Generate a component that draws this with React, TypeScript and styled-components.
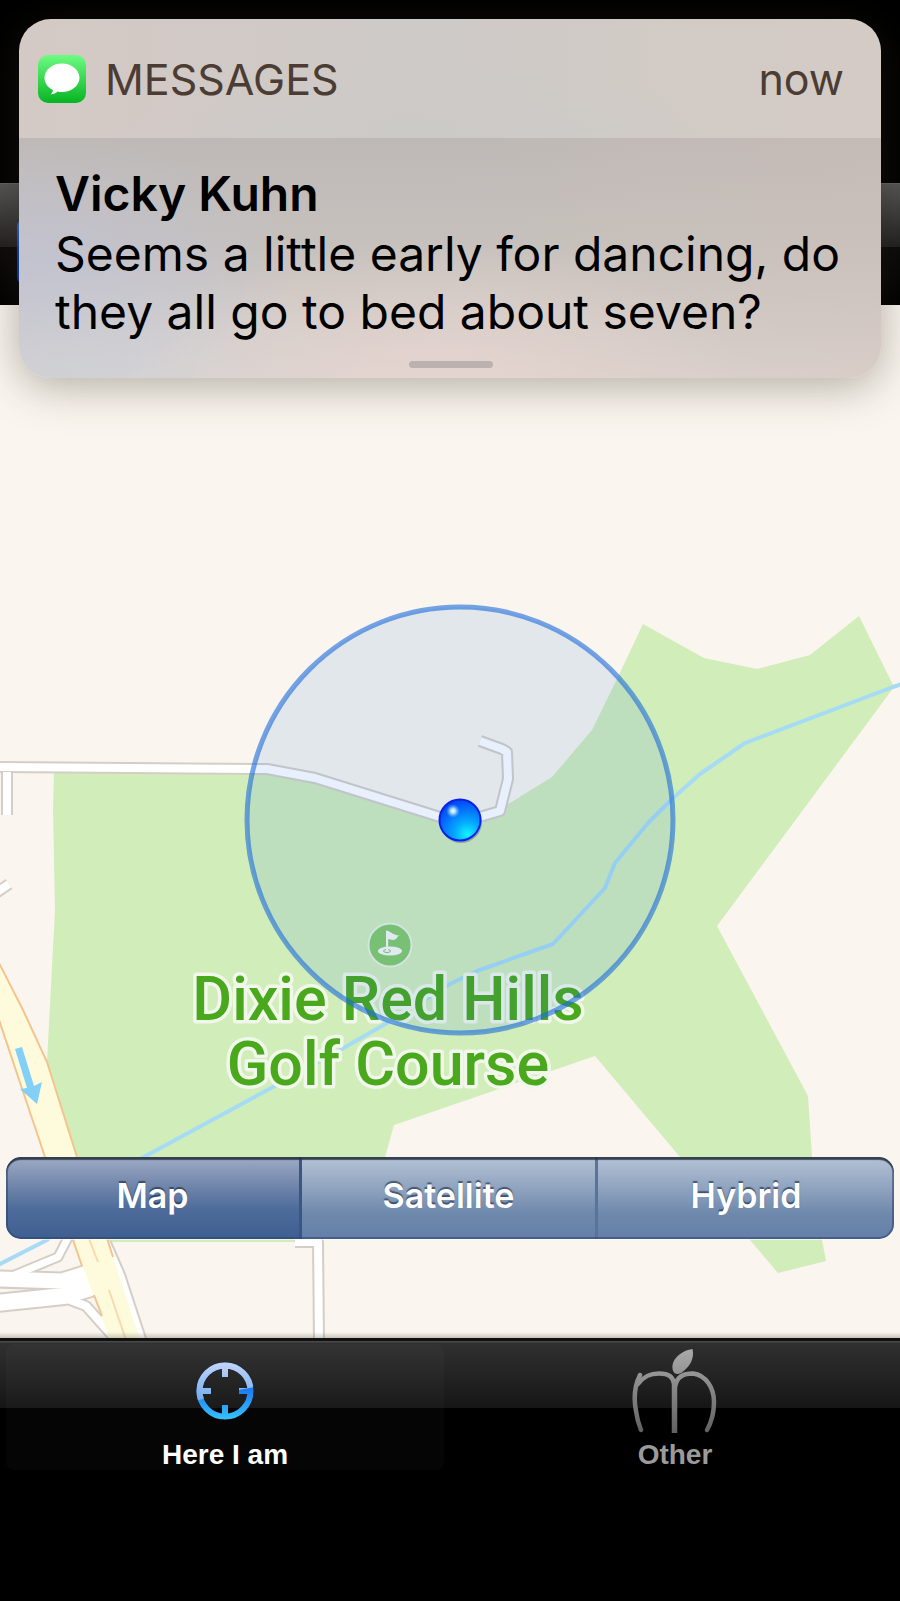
import React, { useState } from 'react';
import styled, { createGlobalStyle, css } from 'styled-components';

const uiFont = "Inter, Roboto, 'Liberation Sans', sans-serif";

const GlobalStyle = createGlobalStyle`
  * { box-sizing: border-box; }
  html, body { margin: 0; background: #000; }
  body { font-family: ${uiFont}; }
  button { font: inherit; border: 0; margin: 0; padding: 0; background: none; cursor: pointer; }
  p, h1, h2 { margin: 0; }
`;

const Screen = styled.main`
  position: relative;
  display: flex;
  flex-direction: column;
  min-height: 100vh;
  background: #000;
`;

const StatusArea = styled.div`
  height: 183px;
  background: #000;
`;

const NavBar = styled.div`
  display: flex;
  align-items: center;
  height: 122px;
  padding: 14px 17px 0;
  border-top: 1px solid #626262;
  background: linear-gradient(#555 0, #202020 63px, #0a0a0a 63px, #000 100%);
`;

const NavChip = styled.span`
  width: 120px;
  height: 66px;
  border-radius: 8px;
  background: linear-gradient(#3a6fd8, #0b3fb0 50%, #0434a8);
`;

/* Notification banner */

const Banner = styled.section`
  position: absolute;
  top: 19px;
  left: 19px;
  right: 19px;
  z-index: 2;
  overflow: hidden;
  border-radius: 32px;
  box-shadow: 0 8px 44px rgba(50, 45, 30, 0.36);
`;

const BannerHeader = styled.header`
  display: flex;
  align-items: center;
  gap: 19px;
  height: 119px;
  padding: 0 37px 0 19px;
  background:
    radial-gradient(ellipse at 47% 120%, rgba(202, 203, 200, 0.7), transparent 50%),
    linear-gradient(90deg, #d4c9c5, #cecac7 45%, #d4cbc5);
  color: #4b3c34;
  font-size: 44px;
  line-height: 60px;
`;

const AppName = styled.h1`
  flex: 1;
  font-size: 43px;
  font-weight: 400;
`;

const BannerTime = styled.span`
  font-size: 43px;
`;

const BannerBody = styled.div`
  display: flex;
  flex-direction: column;
  padding: 24px 35px 10px 36px;
  background:
    radial-gradient(ellipse 32% 55% at 0% 52%, rgba(192, 195, 216, 0.7), transparent),
    radial-gradient(ellipse 36% 62% at 48% 104%, rgba(232, 213, 208, 0.8), transparent),
    radial-gradient(ellipse 34% 50% at 8% 100%, rgba(208, 210, 214, 0.9), transparent),
    linear-gradient(90deg, rgba(190, 190, 186, 0) 50%, rgba(212, 192, 184, 0.3)),
    linear-gradient(#beb9b6, #c6c1bd 45%, #dad2cd);
  color: #000;
  font-size: 48px;
`;

const Sender = styled.h2`
  font-size: 48px;
  font-weight: 600;
  line-height: 63px;
`;

const MessageText = styled.p`
  font-weight: 400;
  line-height: 58px;
`;

const Handle = styled.span`
  align-self: center;
  width: 84px;
  height: 7px;
  margin-top: 20px;
  border-radius: 4px;
  background: #bbb1ae;
`;

/* Map */

const MapArea = styled.div`
  position: relative;
  display: flex;
  flex: 1;
  flex-direction: column;
  justify-content: flex-end;
  min-height: 600px;
  padding: 0 6px 99px;
  overflow: hidden;
  background: #faf5ee;

  &::after {
    content: '';
    position: absolute;
    inset: auto 0 0;
    height: 6px;
    background: linear-gradient(rgba(90, 85, 70, 0), rgba(90, 85, 70, 0.3));
  }
`;

const MapCanvas = styled.svg`
  position: absolute;
  inset: 0;
  width: 100%;
  height: 100%;
`;

const PlaceLabel = styled.text`
  fill: #4aa81c;
  stroke: #f1f7ea;
  stroke-width: 7px;
  stroke-linejoin: round;
  paint-order: stroke;
  font-family: Roboto, 'Liberation Sans', sans-serif;
  font-size: 61px;
  font-weight: 500;
  text-anchor: middle;
`;

const Segments = styled.div`
  position: relative;
  display: grid;
  grid-template-columns: repeat(3, 1fr);
  overflow: hidden;
  height: 82px;
  border-radius: 15px;
  box-shadow: 0 1px 0 rgba(255, 255, 255, 0.6);

  &::after {
    content: '';
    position: absolute;
    inset: 0;
    border-radius: 15px;
    box-shadow: inset 0 3px 1px rgba(42, 50, 62, 0.8), inset 0 0 0 2px rgba(45, 68, 110, 0.55);
    pointer-events: none;
  }
`;

const Segment = styled.button<{ $on: boolean }>`
  padding-bottom: 4px;
  border-right: 3px solid ${p => (p.$on ? '#3a5685' : '#5a7399')};
  color: #fff;
  font-size: 34px;
  font-weight: 600;
  line-height: 44px;
  text-shadow: 0 -2px 1px rgba(20, 35, 65, 0.6);
  background: ${p => p.$on
    ? 'linear-gradient(#9dabc5, #7186ab 35%, #4f6d9b 62%, #3f5e91)'
    : 'linear-gradient(#b4c3d5, #8ca0bd 42%, #6f89ac 68%, #647fa9)'};

  &:last-child { border-right: 0; }
`;

/* Tab bar */

const TabBar = styled.nav`
  display: grid;
  grid-template-columns: 1fr 1fr;
  gap: 12px;
  align-items: start;
  height: 263px;
  padding: 6px 6px 0;
  background: linear-gradient(#111 0, #111 3px, #484a4a 3px, #484a4a 4px, #303030 5px, #161616 70px, #000 70px);
`;

const Tab = styled.button<{ $on: boolean }>`
  display: flex;
  flex-direction: column;
  align-items: center;
  gap: 6px;
  padding: 4px 0 0;
  border-radius: 8px;
  color: #9b9b9b;
  font-family: 'Liberation Sans', Arial, sans-serif;
  font-size: 28px;
  font-weight: 700;
  line-height: 30px;
  ${p => p.$on && css`
    color: #fff;
    background: rgba(255, 255, 255, 0.02);
  `}
`;

const TabIcon = styled.svg`
  width: 86px;
  height: 86px;
`;

function MessagesIcon() {
  return (
    <svg width="48" height="48" viewBox="0 0 48 48" aria-hidden="true">
      <defs>
        <linearGradient id="msg" x1="0" y1="0" x2="0" y2="1">
          <stop offset="0" stopColor="#6dfc82" />
          <stop offset="1" stopColor="#07b422" />
        </linearGradient>
      </defs>
      <rect width="48" height="48" rx="10" fill="url(#msg)" />
      <path fill="#fff" d="M24 8.500C14.300 8.500 6.500 14.900 6.500 22.800c0 5.300 3.300 9.700 8.500 12.200-.3 1.900-1.100 3.200-2.300 4.300 2.600.1 4.900-.9 6.800-2.700 1.400.4 2.900.5 4.500.5 9.700 0 17.500-6.400 17.500-14.300S33.700 8.500 24 8.500z" />
    </svg>
  );
}

const casing = '#d5cec6';

function Road({ points, width }: { points: string; width: number }) {
  return (
    <g fill="none" strokeLinejoin="round">
      <polyline points={points} stroke={casing} strokeWidth={width + 4} />
      <polyline points={points} stroke="#fff" strokeWidth={width} />
    </g>
  );
}

/* Ramps that merge into the highway; their casings are drawn first so the joins stay open. */
const ramps: [string, number][] = [
  ['72,1230 58,1257 12,1276 -4,1278', 7],
  ['-4,1279 62,1281 100,1269', 15],
  ['-4,1303 64,1296 104,1284', 16],
  ['62,1297 86,1306 118,1342', 8],
  ['106,1243 120,1275 142,1342', 8],
];

function MapDrawing() {
  return (
    <MapCanvas viewBox="0 305 900 1033" preserveAspectRatio="xMidYMax slice" role="img" aria-label="Map around your location">
      <defs>
        <radialGradient id="dot" cx="0.68" cy="0.85" r="0.85">
          <stop offset="0" stopColor="#12f6ff" />
          <stop offset="0.35" stopColor="#05acff" />
          <stop offset="0.75" stopColor="#056cfb" />
          <stop offset="1" stopColor="#0348ee" />
        </radialGradient>
        <radialGradient id="glint">
          <stop offset="0" stopColor="#fff" />
          <stop offset="0.35" stopColor="#c2ebff" stopOpacity="0.9" />
          <stop offset="1" stopColor="#55b4ff" stopOpacity="0" />
        </radialGradient>
      </defs>

      <path
        fill="#d1edb9"
        d="M54 772H265L315 780 440 820 483 818 505 806 552 777 592 730 616 681 643 624 704 658 757 669 810 655 859 616 894 687 717 926 808 1096 812 1157 822 1240 826 1261 778 1273 750 1240 680 1157 595 1056 394 1125 385 1157 330 1225 295 1242H85L47 1062 55 910 53 810z"
      />

      <polyline
        fill="none" stroke="#a5dbf4" strokeWidth="4" strokeLinejoin="round"
        points="902,684 893,687 745,743 700,774 672,799 648,823 615,863 605,888 553,944 477,971 450,984 387,1023 340,1050 273,1087 142,1158 47,1240 -2,1265"
      />

      <Road points="-4,767 267,769 315,778 440,817 460,821 483,816 500,811 508,779 507,752 502,749 480,741" width={8} />
      <Road points="7,772 7,815" width={8} />
      <rect x="0" y="764" width="20" height="7" fill="#fff" />
      <Road points="-4,893 9,884" width={8} />
      <Road points="295,1242 318,1242 319,1342" width={8} />

      <g fill="none" strokeLinejoin="round">
        <g stroke={casing}>
          {ramps.map(([points, width]) => <polyline key={points} points={points} strokeWidth={width + 4} />)}
        </g>
        <g stroke="#fff">
          {ramps.map(([points, width]) => <polyline key={points} points={points} strokeWidth={width} />)}
        </g>
      </g>

      <path fill="#fdfbdc" d="M-2 962 23 1010 47 1062 77 1157 107 1238 140 1340H110L73 1240 45 1157-2 1018z" />
      <g fill="none" stroke="#f3c48d" strokeWidth="2">
        <polyline points="-2,961 23,1010 47,1062 77,1157 107,1238 113,1257" />
        <polyline points="-2,1017 45,1157 73,1240 82,1266" />
        <polyline points="94,1295 102,1316" />
        <polyline points="88,1236 98,1262" stroke="#f8d9b0" />
        <polyline points="109,1290 126,1340" stroke="#f8d9b0" />
      </g>
      <path fill="#82cff8" d="M15 1049 22 1047 34 1086 42 1082 37 1104 20 1089 27 1088z" />

      <circle cx="390" cy="945" r="21.500" fill="#84ca68" stroke="#e6f2e0" strokeWidth="2" />
      <ellipse cx="390" cy="951" rx="12" ry="4.500" fill="#f6faf2" />
      <ellipse cx="387" cy="951" rx="3.500" ry="1.500" fill="none" stroke="#82c566" strokeWidth="1" />
      <path d="M386 930.500c4 0 6 4.500 13.500 5-3 1.500-3 4.500-6.500 4.500-2 0-3-1-4.800-1V951H386z" fill="#f6faf2" />

      <PlaceLabel x="388" y="1020">Dixie Red Hills</PlaceLabel>
      <PlaceLabel x="388" y="1085">Golf Course</PlaceLabel>

      <circle cx="460" cy="820" r="213" fill="rgba(22,112,226,0.1)" stroke="rgba(26,106,220,0.6)" strokeWidth="5" />

      <circle cx="461" cy="822" r="21" fill="rgba(40,60,120,0.35)" />
      <circle cx="460" cy="820" r="20.500" fill="url(#dot)" stroke="#0a20e8" strokeWidth="2" />
      <circle cx="453" cy="811" r="7" fill="url(#glint)" />
    </MapCanvas>
  );
}

const crosshair = 'M43 17.500a25.500 25.500 0 1 0 0 51 25.500 25.500 0 1 0 0-51M43 17V29M43 57V69M17 43H29M57 43H69';

function CrosshairIcon() {
  return (
    <TabIcon viewBox="0 0 86 86" aria-hidden="true">
      <defs>
        <linearGradient id="crossTop" gradientUnits="userSpaceOnUse" x1="0" y1="15" x2="0" y2="56">
          <stop offset="0" stopColor="#c3d3f7" />
          <stop offset="1" stopColor="#6aa9ea" />
        </linearGradient>
        <linearGradient id="crossBottom" gradientUnits="userSpaceOnUse" x1="0" y1="38" x2="0" y2="72">
          <stop offset="0" stopColor="#1c72ee" />
          <stop offset="1" stopColor="#36c4ff" />
        </linearGradient>
        <clipPath id="gloss">
          <path d="M0 0H86V37Q50 42 14 53L0 58z" />
        </clipPath>
      </defs>
      <path d={crosshair} fill="none" stroke="url(#crossBottom)" strokeWidth="6" />
      <path d={crosshair} fill="none" stroke="url(#crossTop)" strokeWidth="6" clipPath="url(#gloss)" />
    </TabIcon>
  );
}

function OrchardIcon() {
  return (
    <TabIcon viewBox="0 0 86 86" aria-hidden="true">
      <defs>
        <linearGradient id="stem" gradientUnits="userSpaceOnUse" x1="0" y1="0" x2="0" y2="86">
          <stop offset="0" stopColor="#ababab" />
          <stop offset="1" stopColor="#606060" />
        </linearGradient>
      </defs>
      <path fill="url(#stem)" d="M60.500 1C51 2 42 9 40.500 17c-.5 4 .5 7 2.500 8.500 3 1 6 0 7.500-1.500C57 19 63 11 60.500 1z" />
      <g fill="none" stroke="url(#stem)" strokeLinecap="round">
        <path strokeWidth="4.500" d="M8 27C3 37 1.500 50 4 63c1 8 3 14 5 19" />
        <path strokeWidth="4.500" d="M6 36C12 28 18 25.500 27 25.500c10 0 14 3 15.500 12" />
        <path strokeWidth="4.500" d="M43.500 37C45 29 51 25.500 61 25.500 74 27 82 40 82 54c0 10-3 21-7 28" />
        <path strokeWidth="5.500" strokeLinecap="butt" d="M42.500 32V85" />
      </g>
    </TabIcon>
  );
}

const mapModes = ['Map', 'Satellite', 'Hybrid'];
const tabs = [
  { label: 'Here I am', icon: <CrosshairIcon /> },
  { label: 'Other', icon: <OrchardIcon /> },
];

export default function App() {
  const [mode, setMode] = useState('Map');
  const [tab, setTab] = useState('Here I am');

  return (
    <>
      <GlobalStyle />
      <Screen>
        <StatusArea />
        <NavBar>
          <NavChip />
        </NavBar>
        <MapArea>
          <MapDrawing />
          <Segments role="group" aria-label="Map type">
            {mapModes.map(name => (
              <Segment key={name} type="button" $on={name === mode} aria-pressed={name === mode} onClick={() => setMode(name)}>
                {name}
              </Segment>
            ))}
          </Segments>
        </MapArea>
        <TabBar>
          {tabs.map(({ label, icon }) => (
            <Tab key={label} type="button" $on={label === tab} aria-current={label === tab ? 'page' : undefined} onClick={() => setTab(label)}>
              {icon}
              {label}
            </Tab>
          ))}
        </TabBar>
        <Banner>
          <BannerHeader>
            <MessagesIcon />
            <AppName>MESSAGES</AppName>
            <BannerTime>now</BannerTime>
          </BannerHeader>
          <BannerBody>
            <Sender>Vicky Kuhn</Sender>
            <MessageText>Seems a little early for dancing, do they all go to bed about seven?</MessageText>
            <Handle />
          </BannerBody>
        </Banner>
      </Screen>
    </>
  );
}
